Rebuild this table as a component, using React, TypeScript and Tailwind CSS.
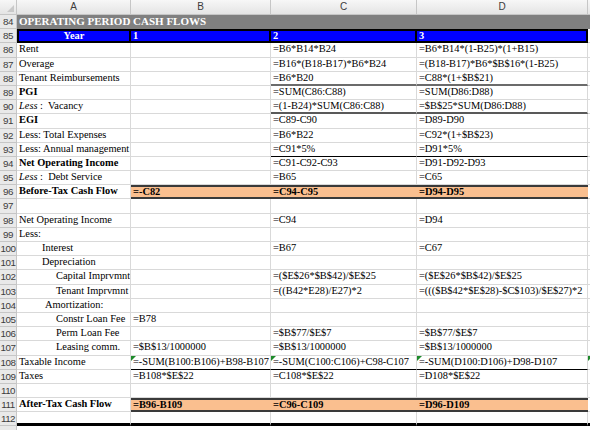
import React from "react";

const GRID = "border-[#d9d9d9]";

type CellProps = {
  w: string;
  children?: React.ReactNode;
  className?: string;
  tri?: boolean;
};

function Cell({ w, children, className = "", tri }: CellProps) {
  return (
    <div
      className={`relative ${w} h-full shrink-0 overflow-hidden whitespace-pre pl-[2px] border-r border-b ${GRID} ${className}`}
    >
      {tri && (
        <span className="absolute left-0 top-0 w-0 h-0 border-t-[5px] border-r-[5px] border-t-[#1d8a2a] border-r-transparent" />
      )}
      {children}
    </div>
  );
}

function Row({ n, children, className = "" }: { n?: number; children?: React.ReactNode; className?: string }) {
  return (
    <div className={`flex h-[14.2px] ${className}`}>
      <div className="w-[17px] h-full shrink-0 overflow-hidden bg-[#e9e9e9] border-r border-b border-[#c6c6c6] text-center text-[9.8px] leading-[13px] text-[#3c3c3c] font-['Liberation_Sans',sans-serif] tracking-[-0.5px]">
        {n}
      </div>
      {children}
    </div>
  );
}

const A = "w-[114px]";
const B = "w-[140px]";
const C = "w-[146px]";
const D = "w-[171px]";
const E = "flex-1";

const ORANGE = "bg-[#fabf8f] font-bold border-r-0 border-t-2 border-t-[#3a3a3a] border-b-2 border-b-[#3a3a3a] leading-[10px]";

type Line = {
  n: number;
  a?: React.ReactNode;
  b?: string;
  c?: string;
  d?: string;
  aCls?: string;
  bCls?: string;
  cdCls?: string;
  tri?: boolean;
  orange?: boolean;
};

const less = (rest: string) => (
  <>
    <i>Less</i>
    {" :  " + rest}
  </>
);

const lines: Line[] = [
  { n: 86, a: "Rent", c: "=B6*B14*B24", d: "=B6*B14*(1-B25)*(1+B15)" },
  { n: 87, a: "Overage", c: "=B16*(B18-B17)*B6*B24", d: "=(B18-B17)*B6*$B$16*(1-B25)" },
  { n: 88, a: "Tenant Reimbursements", c: "=B6*B20", d: "=C88*(1+$B$21)", cdCls: "border-b-2 border-b-[#6b6b6b]" },
  { n: 89, a: "PGI", aCls: "font-bold", c: "=SUM(C86:C88)", d: "=SUM(D86:D88)" },
  { n: 90, a: less("Vacancy"), c: "=(1-B24)*SUM(C86:C88)", d: "=$B$25*SUM(D86:D88)", cdCls: "border-b-2 border-b-[#595959]" },
  { n: 91, a: "EGI", aCls: "font-bold", c: "=C89-C90", d: "=D89-D90" },
  { n: 92, a: "Less: Total Expenses", c: "=B6*B22", d: "=C92*(1+$B$23)" },
  { n: 93, a: "Less: Annual management fee", c: "=C91*5%", d: "=D91*5%", cdCls: "border-b-black" },
  { n: 94, a: "Net Operating Income", aCls: "font-bold", c: "=C91-C92-C93", d: "=D91-D92-D93" },
  { n: 95, a: less("Debt Service"), c: "=B65", d: "=C65" },
  { n: 96, a: "Before-Tax Cash Flow", aCls: "font-bold", b: "=-C82", c: "=C94-C95", d: "=D94-D95", orange: true },
  { n: 97 },
  { n: 98, a: "Net Operating Income", c: "=C94", d: "=D94" },
  { n: 99, a: "Less:" },
  { n: 100, a: "Interest", aCls: "pl-[25px]", c: "=B67", d: "=C67" },
  { n: 101, a: "Depreciation", aCls: "pl-[25px]" },
  { n: 102, a: "Capital Imprvmnt", aCls: "pl-[39px]", c: "=($E$26*$B$42)/$E$25", d: "=($E$26*$B$42)/$E$25" },
  { n: 103, a: "Tenant Imprvmnt", aCls: "pl-[39px]", c: "=((B42*E28)/E27)*2", d: "=((($B$42*$E$28)-$C$103)/$E$27)*2" },
  { n: 104, a: "Amortization:", aCls: "pl-[28px]" },
  { n: 105, a: "Constr Loan Fee", aCls: "pl-[39px]", b: "=B78" },
  { n: 106, a: "Perm Loan Fee", aCls: "pl-[39px]", c: "=$B$77/$E$7", d: "=$B$77/$E$7" },
  { n: 107, a: "Leasing comm.", aCls: "pl-[39px]", b: "=$B$13/1000000", c: "=$B$13/1000000", d: "=$B$13/1000000" },
  {
    n: 108,
    a: "Taxable Income",
    b: "=-SUM(B100:B106)+B98-B107",
    c: "=-SUM(C100:C106)+C98-C107",
    d: "=-SUM(D100:D106)+D98-D107",
    bCls: "border-b-black",
    cdCls: "border-b-black",
    tri: true,
  },
  { n: 109, a: "Taxes", b: "=B108*$E$22", c: "=C108*$E$22", d: "=D108*$E$22" },
  { n: 110 },
  { n: 111, a: "After-Tax Cash Flow", aCls: "font-bold", b: "=B96-B109", c: "=C96-C109", d: "=D96-D109", orange: true },
];

export default function App() {
  return (
    <div className="w-[590px] h-[430px] overflow-hidden bg-white text-black font-['Liberation_Serif',serif] text-[10.4px] leading-[12px]">
      {/* column headers */}
      <div className="flex h-[15px] bg-gradient-to-b from-[#f7f7f7] to-[#e3e3e3] text-[10px] leading-[14px] text-[#3c3c3c] font-['Liberation_Sans',sans-serif]">
        <div className="relative w-[17px] h-full shrink-0 border-r border-b border-[#c6c6c6]">
          <span className="absolute right-[2px] bottom-[2px] w-0 h-0 [border-bottom:7px_solid_#c9c9c9] [border-left:7px_solid_transparent]" />
        </div>
        <div className="w-[114px] shrink-0 text-center border-r border-b border-[#c6c6c6]">A</div>
        <div className="w-[140px] shrink-0 text-center border-r border-b border-[#c6c6c6]">B</div>
        <div className="w-[146px] shrink-0 text-center border-r border-b border-[#c6c6c6]">C</div>
        <div className="w-[171px] shrink-0 text-center border-r border-b border-[#c6c6c6]">D</div>
        <div className="flex-1 border-b border-[#c6c6c6]" />
      </div>

      <Row n={84}>
        <div className="flex-1 h-full bg-[#808080] text-white font-bold text-[11px] leading-[13px] pl-[2px] whitespace-nowrap">
          OPERATING PERIOD CASH FLOWS
        </div>
      </Row>

      <Row n={85}>
        <div className={`${A} h-full shrink-0 bg-[#0000ff] text-white font-bold text-center leading-[10px] border-2 border-black`}>Year</div>
        <div className={`${B} h-full shrink-0 bg-[#0000ff] text-white font-bold pl-[2px] leading-[10px] border-y-2 border-r-2 border-black`}>1</div>
        <div className={`${C} h-full shrink-0 bg-[#0000ff] text-white font-bold pl-[2px] leading-[10px] border-y-2 border-r-2 border-black`}>2</div>
        <div className={`${D} h-full shrink-0 bg-[#0000ff] text-white font-bold pl-[2px] leading-[10px] border-y-2 border-r-2 border-black`}>3</div>
        <div className={`${E} h-full border-b ${GRID}`} />
      </Row>

      {lines.map((l) => (
        <Row key={l.n} n={l.n}>
          <Cell w={A} className={l.aCls}>{l.a}</Cell>
          <Cell w={B} tri={l.tri} className={l.orange ? ORANGE : l.bCls}>{l.b}</Cell>
          <Cell w={C} tri={l.tri} className={l.orange ? ORANGE : l.cdCls}>{l.c}</Cell>
          <Cell w={D} tri={l.tri} className={l.orange ? ORANGE : l.cdCls}>{l.d}</Cell>
          <Cell w={E} tri={l.tri} />
        </Row>
      ))}

      <Row n={112}>
        <Cell w={A} className="border-b-[3px] border-b-black" />
        <Cell w={B} className="border-b-[3px] border-b-black" />
        <Cell w={C} className="border-b-[3px] border-b-black" />
        <Cell w={D} className="border-b-[3px] border-b-black" />
        <Cell w={E} className="border-b-[3px] border-b-black" />
      </Row>
      <Row />
    </div>
  );
}
